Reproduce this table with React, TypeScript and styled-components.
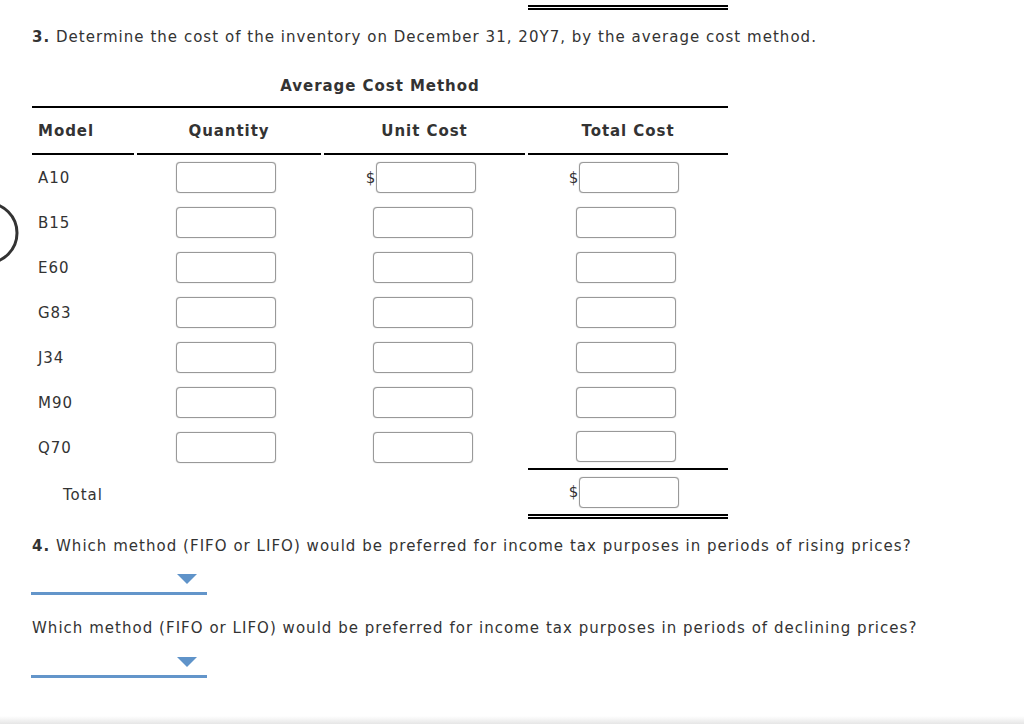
import styled, { createGlobalStyle } from "styled-components";

const GlobalStyle = createGlobalStyle`
    html, body {
        margin: 0;
        padding: 0;
        background: #fff;
    }
    body {
        font-family: "DejaVu Sans", Verdana, sans-serif;
        font-size: 15px;
        letter-spacing: 1.03px;
        color: #333;
    }
`

const Page = styled.div`
    position: relative;
    width: 1024px;
    height: 724px;
    overflow: hidden;
    padding-left: 32px;
    box-sizing: border-box;
`

const PrevTotalRule = styled.div`
    width: 200px;
    margin-left: 496px;
    margin-top: 5px;
    border-top: 5px double #000;
`

const Question = styled.p<{ $gap?: number }>`
    margin: ${p => p.$gap ?? 17}px 0 0;
    line-height: 20px;
    white-space: nowrap;

    b {
        font-weight: bold;
    }
`

const TableTitle = styled.div`
    width: 696px;
    margin-top: 29px;
    text-align: center;
    font-weight: bold;
    letter-spacing: 0.95px;
    line-height: 20px;
`

const Grid = styled.div`
    display: grid;
    grid-template-columns: 102px 184px 201px 200px;
    column-gap: 3px;
    width: 696px;
    margin-top: 10px;
    border-top: 2px solid #000;
`

const Cell = styled.div<{ $head?: boolean; $pad?: number; $indent?: number; $rule?: "single" | "double"; $left?: boolean; $h?: number }>`
    display: flex;
    align-items: center;
    justify-content: ${p => p.$left ? "flex-start" : "center"};
    box-sizing: border-box;
    height: ${p => p.$h ?? 45}px;
    padding-left: ${p => p.$indent ?? 0}px;
    padding-right: ${p => p.$pad ?? 0}px;
    font-weight: ${p => p.$head ? "bold" : "normal"};
    letter-spacing: 0.95px;
    border-bottom: ${p => p.$head ? "2px solid #000" : p.$rule === "single" ? "2px solid #000" : p.$rule === "double" ? "5px double #000" : "none"};
`

const Dollar = styled.span`
    margin-left: -3px;
    margin-right: 1px;
    letter-spacing: 0;
`

const Input = styled.input`
    width: 100px;
    height: 31px;
    box-sizing: border-box;
    margin: 0;
    border: 1px solid #999;
    border-radius: 4px;
    background: #fff;
    box-shadow: 0 0 1px rgba(0, 0, 0, 0.4);
    outline: none;
`

const Select = styled.div<{ $gap: number }>`
    display: flex;
    justify-content: flex-end;
    align-items: flex-end;
    box-sizing: border-box;
    width: 176px;
    height: 29px;
    margin: ${p => p.$gap}px 0 0 -1px;
    padding: 0 10px 8px 0;
    border-bottom: 3px solid #6395ca;
`

const Caret = styled.span`
    width: 0;
    height: 0;
    border-left: 10px solid transparent;
    border-right: 10px solid transparent;
    border-top: 10px solid #5f93c9;
`

const SideArc = styled.svg`
    position: absolute;
    left: 0;
    top: 201px;
`

const BottomShade = styled.div`
    position: absolute;
    left: 0;
    right: 0;
    bottom: 0;
    height: 8px;
    background: linear-gradient(#fff, #e6e6e6);
`

const models = ["A10", "B15", "E60", "G83", "J34", "M90", "Q70"];

function Money(props: { dollar?: boolean }) {
    return (
        <>
            {props.dollar && <Dollar>$</Dollar>}
            <Input type="text" />
        </>
    )
}

export default function App() {
    return (
        <Page>
            <GlobalStyle />
            <SideArc width="20" height="66" viewBox="0 0 20 66">
                <circle cx="-13" cy="32" r="30" fill="none" stroke="#333" strokeWidth="3" />
            </SideArc>
            <PrevTotalRule />
            <Question><b>3.</b> Determine the cost of the inventory on December 31, 20Y7, by the average cost method.</Question>
            <TableTitle>Average Cost Method</TableTitle>
            <Grid>
                <Cell $head $left $indent={6} $h={47}>Model</Cell>
                <Cell $head $h={47}>Quantity</Cell>
                <Cell $head $h={47}>Unit Cost</Cell>
                <Cell $head $h={47}>Total Cost</Cell>
                {models.map((m, i) => {
                    const last = i === models.length - 1;
                    return [
                        <Cell key={m + "m"} $left $indent={6}>{m}</Cell>,
                        <Cell key={m + "q"} $pad={7}><Input type="text" /></Cell>,
                        <Cell key={m + "u"} $pad={4}><Money dollar={i === 0} /></Cell>,
                        <Cell key={m + "t"} $pad={5} $rule={last ? "single" : undefined}><Money dollar={i === 0} /></Cell>,
                    ]
                })}
                <Cell $left $indent={31} $h={49}>Total</Cell>
                <Cell $h={49} />
                <Cell $h={49} />
                <Cell $pad={5} $h={49} $rule="double"><Money dollar /></Cell>
            </Grid>
            <Question><b>4.</b> Which method (FIFO or LIFO) would be preferred for income tax purposes in periods of rising prices?</Question>
            <Select $gap={10}><Caret /></Select>
            <Question $gap={23}>Which method (FIFO or LIFO) would be preferred for income tax purposes in periods of declining prices?</Question>
            <Select $gap={11}><Caret /></Select>
            <BottomShade />
        </Page>
    )
}
